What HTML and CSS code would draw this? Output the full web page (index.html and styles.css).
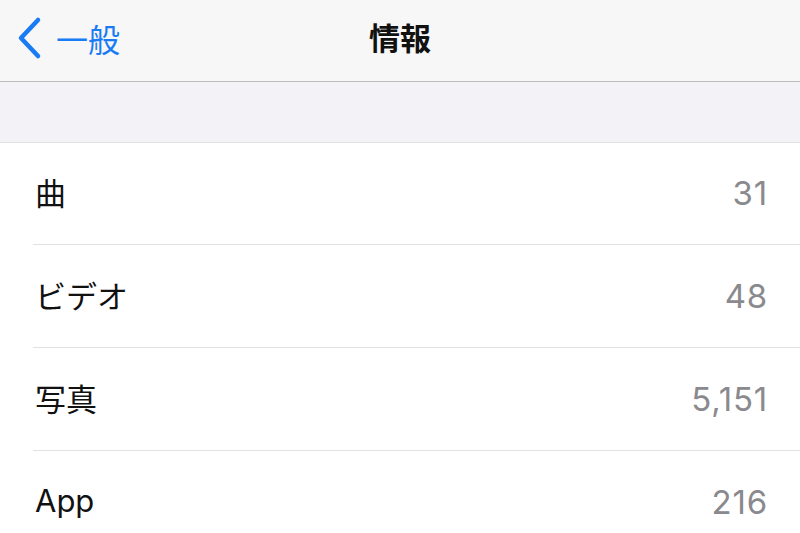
FILE: index.html
```html
<!DOCTYPE html>
<html lang="ja">

<head>
  <meta charset="UTF-8">
  <meta name="viewport" content="width=device-width, initial-scale=1.0">
  <title>情報</title>
  <link rel="stylesheet" href="styles.css">
</head>

<body>
  <header class="navbar">
    <a class="nav-back" href="#">
      <svg class="chevron" width="28" height="44" viewBox="0 0 28 44">
        <path d="M23 4 L6 22 L23 40" fill="none" stroke="currentColor" stroke-width="4.5" stroke-linecap="round" stroke-linejoin="round" />
      </svg>
      <span>一般</span>
    </a>
    <h1 class="nav-title">情報</h1>
  </header>

  <div class="band"></div>

  <ul class="list">
    <li class="row"><span class="label">曲</span><span class="value">31</span></li>
    <li class="row"><span class="label">ビデオ</span><span class="value">48</span></li>
    <li class="row"><span class="label">写真</span><span class="value">5,151</span></li>
    <li class="row"><span class="label">App</span><span class="value">216</span></li>
  </ul>
</body>

</html>
```

FILE: styles.css
```css
* {
  box-sizing: border-box;
}

body {
  margin: 0;
  padding: 0;
  background-color: #fff;
  font-family: "Inter", "Noto Sans CJK JP", sans-serif;
  overflow: hidden;
}

.navbar {
  position: relative;
  display: flex;
  align-items: center;
  height: 82px;
  padding-left: 15px;
  background-color: #f7f7f7;
  border-bottom: 1px solid #bdbdbf;
}

.nav-back {
  display: flex;
  align-items: center;
  gap: 13px;
  color: #1a7cf5;
  text-decoration: none;
  font-size: 32px;
  margin-top: -6px;
}

.chevron {
  display: block;
}

.nav-title {
  position: absolute;
  left: 0;
  right: 0;
  top: 14px;
  margin: 0;
  text-align: center;
  font-size: 31px;
  font-weight: 700;
  color: #111;
}

.band {
  height: 61px;
  background-color: #f2f2f7;
  border-bottom: 1px solid #e3e3e6;
}

.list {
  list-style: none;
  margin: 0;
  padding: 0 0 0 33px;
}

.row {
  display: flex;
  align-items: center;
  justify-content: space-between;
  height: 103px;
  padding-right: 33px;
  border-bottom: 1px solid #e2e2e4;
  padding-bottom: 4px;
}

.row:first-child {
  height: 102px;
}

.label {
  font-size: 31px;
  color: #111;
  padding-left: 2px;
}

.value {
  font-size: 33px;
  letter-spacing: 0.8px;
  color: #8a8a8e;
  margin-right: -1px;
  padding-top: 3px;
}
```
